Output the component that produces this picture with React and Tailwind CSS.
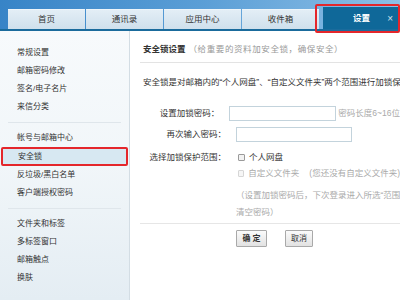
import React from "react";

const font = {
  fontFamily: '"Liberation Sans", "Noto Sans CJK SC", sans-serif',
};

const tabs = ["首页", "通讯录", "应用中心", "收件箱"];

const SideItem = ({ children, active }) => (
  <div
    className={
      active
        ? "h-[19px] flex items-center pl-[15px] mx-[1px] bg-[#d7e8f2] border-2 border-[#e4262b] rounded-[2px]"
        : "h-[18px] flex items-center pl-[17px]"
    }
  >
    {children}
  </div>
);

const Divider = () => <div className="mx-[8px] my-[6px] h-px bg-[#dfe6eb]" />;

const Checkbox = ({ disabled }) => (
  <span
    className={
      disabled
        ? "inline-block w-[7px] h-[7px] border border-[#d6d6d6] bg-[#f6f6f6] rounded-[1px]"
        : "inline-block w-[7px] h-[7px] border border-[#9a9a9a] bg-[#f2f2f2] rounded-[1px]"
    }
  />
);

export default function App() {
  return (
    <div
      className="w-[400px] h-[300px] overflow-hidden relative text-[8.5px] text-[#333] bg-white [text-spacing-trim:space-all]"
      style={font}
    >
      {/* Top bar */}
      <div className="h-[31px] bg-gradient-to-r from-[#3784c7] via-[#5a9ed6] to-[#8cbfe6] border-b-2 border-[#1a6b9c] flex items-end pl-[8px]">
        {tabs.map((t) => (
          <div
            key={t}
            className="w-[77px] h-[20px] mr-px flex items-center justify-center bg-gradient-to-b from-[#e3eef6] to-[#cfe0ec] border-t border-[#eef5fa] text-[#333]"
          >
            {t}
          </div>
        ))}
        <div className="ml-[3px] flex-1 h-[22px] flex items-center justify-center relative bg-[#0f6899] text-white font-bold">
          设置
          <span className="absolute right-[7px] top-0 h-full flex items-center text-[10px] font-normal text-[#cfe0ec]">
            ×
          </span>
        </div>
      </div>
      <div className="absolute left-[315px] top-[4px] w-[85px] h-[29px] border-2 border-[#e4262b] rounded-[2px]" />

      <div className="flex h-[269px]">
        {/* Sidebar */}
        <aside className="w-[130px] text-[8px] border-r border-[#d3dde4] bg-gradient-to-b from-[#f7fafc] via-[#f1f6f9] to-[#e4edf3] pt-[13px]">
          <SideItem>常规设置</SideItem>
          <SideItem>邮箱密码修改</SideItem>
          <SideItem>签名/电子名片</SideItem>
          <SideItem>来信分类</SideItem>
          <Divider />
          <SideItem>帐号与邮箱中心</SideItem>
          <SideItem active>安全锁</SideItem>
          <SideItem>反垃圾/黑白名单</SideItem>
          <SideItem>客户端授权密码</SideItem>
          <Divider />
          <SideItem>文件夹和标签</SideItem>
          <SideItem>多标签窗口</SideItem>
          <SideItem>邮箱触点</SideItem>
          <SideItem>换肤</SideItem>
        </aside>

        {/* Main */}
        <main className="flex-1 pl-[10px] pt-[12px] overflow-hidden whitespace-nowrap">
          <div className="h-[20px] border-b border-[#e3e3e3] pl-[3px] flex items-start">
            <span className="font-bold">安全锁设置</span>
            <span className="ml-[3px] text-[#999] tracking-[0.6px]">（给重要的资料加安全锁，确保安全）</span>
          </div>

          <div className="mt-[13px] pl-[3px] h-[12px] leading-[12px]">
            安全锁是对邮箱内的“个人网盘”、“自定义文件夹”两个范围进行加锁保护，让您的资料更安全
          </div>

          <div className="mt-[18px] flex items-center h-[15px]">
            <div className="w-[86px] text-right">设置加锁密码：</div>
            <div className="ml-[10px] w-[116px] h-[15px] border border-[#c3d3dc] bg-white" />
            <span className="ml-[2px] text-[#aaa]">密码长度6~16位</span>
          </div>

          <div className="mt-[6px] flex items-center h-[15px]">
            <div className="w-[86px] text-right">再次输入密码：</div>
            <div className="ml-[10px] w-[116px] h-[15px] border border-[#c3d3dc] bg-white" />
          </div>

          <div className="mt-[9px] flex items-center h-[12px]">
            <div className="w-[86px] text-right">选择加锁保护范围：</div>
            <div className="ml-[12px] flex items-center gap-[4px]">
              <Checkbox />
              <span>个人网盘</span>
            </div>
          </div>

          <div className="mt-[4px] flex items-center h-[12px] pl-[98px] text-[#aaa]">
            <Checkbox disabled />
            <span className="ml-[4px]">自定义文件夹</span>
            <span className="ml-[10px]">(您还没有自定义文件夹)</span>
          </div>

          <div className="mt-[10px] h-[12px] pl-[96px] text-[#aaa] flex items-center">
            （设置加锁密码后，下次登录进入所选“范围”需要输入加锁密码，退出邮箱时自动
          </div>
          <div className="mt-[5px] h-[12px] pl-[96px] text-[#aaa] flex items-center">
            清空密码）
          </div>

          <div className="mt-[5px] border-t border-[#e6e6e6]" />

          <div className="mt-[6px] pl-[96px] flex gap-[18px]">
            <button className="w-[31px] h-[17px] border border-[#a9a9a9] bg-gradient-to-b from-[#fbfbfb] to-[#e2e2e2] text-[8px] font-bold text-[#333] rounded-[1px]">
              确 定
            </button>
            <button className="w-[28px] h-[17px] border border-[#a9a9a9] bg-gradient-to-b from-[#fbfbfb] to-[#e2e2e2] text-[8px] text-[#333] rounded-[1px]">
              取消
            </button>
          </div>
        </main>
      </div>
    </div>
  );
}
